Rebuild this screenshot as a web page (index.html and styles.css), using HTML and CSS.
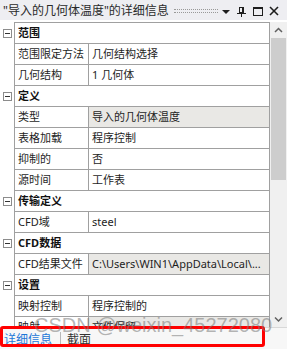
FILE: index.html
```html
<!DOCTYPE html>
<html lang="zh-CN">
<head>
  <meta charset="UTF-8" />
  <title>详细信息</title>
  <link rel="stylesheet" href="styles.css">
</head>
<body>
  <div class="panel">
    <div class="titlebar">
      <span class="title">"导入的几何体温度"的详细信息</span>
      <span class="grip"></span>
      <svg class="tb-icon" width="16" height="20" viewBox="0 0 16 20"><polygon points="4,10 12,10 8,14" fill="#1e1e1e"/></svg>
      <svg class="tb-icon" width="16" height="20" viewBox="0 0 16 20" fill="none" stroke="#1e1e1e">
        <rect x="5.5" y="7.5" width="3" height="5"/>
        <line x1="9" y1="7" x2="9" y2="13" stroke-width="2"/>
        <line x1="3" y1="13.5" x2="12" y2="13.5"/>
        <line x1="7.5" y1="14" x2="7.5" y2="17"/>
      </svg>
      <svg class="tb-icon" width="16" height="20" viewBox="0 0 16 20" fill="none" stroke="#1e1e1e">
        <rect x="3.5" y="7.5" width="9" height="8"/>
        <line x1="3" y1="8.5" x2="13" y2="8.5"/>
      </svg>
      <svg class="tb-icon" width="16" height="20" viewBox="0 0 16 20" fill="none" stroke="#1e1e1e" stroke-width="1.6">
        <line x1="4" y1="7" x2="12" y2="15"/>
        <line x1="12" y1="7" x2="4" y2="15"/>
      </svg>
    </div>

    <div class="main">
      <div class="sheet">
        <div class="row cat"><div class="gutter"><span class="toggle"></span></div><div class="cell">范围</div></div>
        <div class="row"><div class="gutter"></div><div class="cell label">范围限定方法</div><div class="cell value">几何结构选择</div></div>
        <div class="row"><div class="gutter"></div><div class="cell label">几何结构</div><div class="cell value">1 几何体</div></div>

        <div class="row cat"><div class="gutter"><span class="toggle"></span></div><div class="cell">定义</div></div>
        <div class="row"><div class="gutter"></div><div class="cell label">类型</div><div class="cell value grey">导入的几何体温度</div></div>
        <div class="row"><div class="gutter"></div><div class="cell label">表格加载</div><div class="cell value">程序控制</div></div>
        <div class="row"><div class="gutter"></div><div class="cell label">抑制的</div><div class="cell value">否</div></div>
        <div class="row"><div class="gutter"></div><div class="cell label">源时间</div><div class="cell value">工作表</div></div>

        <div class="row cat"><div class="gutter"><span class="toggle"></span></div><div class="cell">传输定义</div></div>
        <div class="row"><div class="gutter"></div><div class="cell label">CFD域</div><div class="cell value">steel</div></div>

        <div class="row cat"><div class="gutter"><span class="toggle"></span></div><div class="cell">CFD数据</div></div>
        <div class="row"><div class="gutter"></div><div class="cell label">CFD结果文件</div><div class="cell value grey">C:\Users\WIN1\AppData\Local\...</div></div>

        <div class="row cat"><div class="gutter"><span class="toggle"></span></div><div class="cell">设置</div></div>
        <div class="row"><div class="gutter"></div><div class="cell label">映射控制</div><div class="cell value">程序控制的</div></div>
        <div class="row"><div class="gutter"></div><div class="cell label">映射</div><div class="cell value grey">文件保留</div></div>
      </div>

      <div class="scrollbar">
        <div class="sb-btn"><svg width="17" height="16" viewBox="0 0 17 16"><polyline points="5,10 8.5,6.5 12,10" fill="none" stroke="#606060" stroke-width="1.5"/></svg></div>
        <div class="sb-track"><div class="sb-thumb"></div></div>
        <div class="sb-btn"><svg width="17" height="16" viewBox="0 0 17 16"><polyline points="5,6.5 8.5,10 12,6.5" fill="none" stroke="#606060" stroke-width="1.5"/></svg></div>
      </div>
    </div>

    <div class="tabs">
      <span class="tab active">详细信息</span>
      <span class="tab-sep"></span>
      <span class="tab">截面</span>
    </div>

    <!-- annotation + watermark on top of the shot -->
    <div class="highlight"></div>
    <div class="watermark">CSDN @weixin_45272080</div>
  </div>
</body>
</html>
```

FILE: styles.css
```css
body {
  margin: 0;
  font-family: "Noto Sans", "Noto Sans CJK SC", sans-serif;
  color: #1e1e1e;
  background: #fff;
}

.panel {
  position: relative;
  width: 287px;
  height: 349px;
  overflow: hidden;
}

/* Title bar */
.titlebar {
  display: flex;
  align-items: center;
  height: 20px;
  padding: 0 5px 0 3px;
  background: #eeeef2;
}

.title {
  font-size: 12px;
  white-space: nowrap;
  color: #2a2a2a;
}

.grip {
  flex: 1;
  height: 2px;
  margin: 1px 0 0 5px;
  border-top: 1px dotted #999;
  border-bottom: 1px dotted #999;
}

.tb-icon { display: block; flex: none; }

/* Property grid */
.main {
  display: flex;
  height: 307px;
  padding-top: 2px;
  box-sizing: border-box;
  overflow: hidden;
}

.sheet {
  width: 270px;
  flex: none;
  font-size: 11px;
}

.row {
  display: grid;
  grid-template-columns: 14px 75px 181px;
  height: 21px;
}

.row:first-child { height: 22px; }
.row:first-child .cell { border-top: 1px solid #a0a0a0; }

.gutter {
  display: flex;
  align-items: center;
  padding-left: 3px;
}

.toggle {
  position: relative;
  width: 7px;
  height: 7px;
  border: 1px solid #8c8c8c;
}

.toggle::after {
  content: "";
  position: absolute;
  left: 1px;
  top: 3px;
  width: 5px;
  height: 1px;
  background: #333;
}

.cell {
  box-sizing: border-box;
  padding-left: 3px;
  line-height: 20px;
  white-space: nowrap;
  overflow: hidden;
  border-right: 1px solid #a0a0a0;
  border-bottom: 1px solid #a0a0a0;
}

.label { border-left: 1px solid #a0a0a0; }

.cat .cell {
  grid-column: 2 / 4;
  border-left: 1px solid #a0a0a0;
  font-weight: bold;
  color: #111;
}

.grey { background: #e9e8e5; }

/* Scrollbar */
.scrollbar {
  display: flex;
  flex-direction: column;
  width: 17px;
  background: #f0f0f0;
}

.sb-btn { height: 16px; }
.sb-btn svg { display: block; }

.sb-track { flex: 1; }

.sb-thumb {
  height: 142px;
  margin: 0 1px;
  background: #cdcdcd;
}

/* Bottom tabs */
.tabs {
  display: flex;
  align-items: center;
  height: 22px;
  padding-left: 4px;
  border-top: 1px solid #d8d8d8;
  box-sizing: border-box;
  background: #f7f7f7;
  font-size: 12px;
}

.tab { color: #333; }
.tab.active { color: #1e78d7; }

.tab-sep {
  width: 1px;
  height: 14px;
  margin: 0 6px 0 8px;
  background: #b8b8b8;
}

.highlight {
  position: absolute;
  left: 0;
  top: 326px;
  width: 265px;
  height: 21px;
  box-sizing: border-box;
  border: 3px solid #f00;
  border-radius: 3px;
}

.watermark {
  position: absolute;
  left: 34px;
  top: 314px;
  font-family: "Liberation Sans", sans-serif;
  font-size: 20px;
  white-space: nowrap;
  color: rgba(120, 120, 120, 0.55);
}
```
